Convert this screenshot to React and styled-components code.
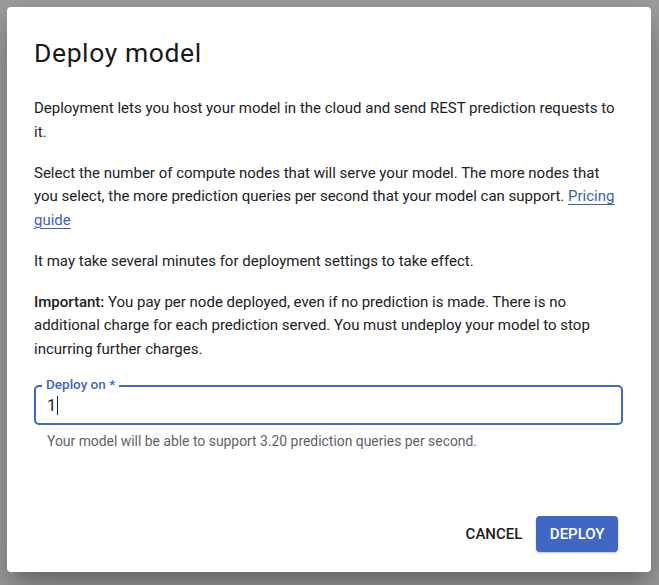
import React from "react";
import styled, { createGlobalStyle } from "styled-components";

const Global = createGlobalStyle`
  html, body { margin: 0; padding: 0; }
  body {
    background: #9f9f9f;
    font-family: Roboto, "Liberation Sans", Arial, sans-serif;
    -webkit-font-smoothing: antialiased;
  }
`;

const Page = styled.div`
  width: 659px;
  height: 585px;
  box-sizing: border-box;
  padding: 7px 8px 13px 7px;
  background: #9f9f9f;
`;

const Dialog = styled.div`
  box-sizing: border-box;
  width: 644px;
  height: 565px;
  background: #fff;
  border-radius: 4px;
  box-shadow: 0 11px 15px -7px rgba(0,0,0,0.2), 0 24px 38px 3px rgba(0,0,0,0.14), 0 9px 46px 8px rgba(0,0,0,0.12);
  padding: 30px 28px 20px 27px;
  display: flex;
  flex-direction: column;
`;

const Title = styled.h2`
  margin: 0;
  font-size: 26.5px;
  letter-spacing: 0.6px;
  line-height: 32px;
  font-weight: 400;
  color: #1a1a1a;
`;

const Body = styled.div`
  margin-top: 28px;
  color: #202124;
  font-size: 15px;
  line-height: 23.5px;
`;

const Para = styled.p`
  margin: 0 0 17.5px 0;
  &:last-child { margin-bottom: 0; }
`;

const Strong = styled.span`
  font-weight: 500;
`;

const Link = styled.a`
  color: #3b5fb5;
  text-decoration: underline;
  text-underline-offset: 3px;
  text-decoration-thickness: 1px;
`;

const Field = styled.div`
  position: relative;
  margin-top: 24px;
`;

const InputBox = styled.div`
  box-sizing: border-box;
  height: 40px;
  border: 2px solid #3f67c3;
  border-radius: 5px;
  display: flex;
  align-items: center;
  padding: 0 11px;
  font-size: 16.5px;
  color: #202124;
`;

const Caret = styled.span`
  display: inline-block;
  width: 1px;
  height: 19px;
  background: #202124;
  margin-left: 1px;
`;

const Label = styled.label`
  position: absolute;
  left: 8px;
  top: -9px;
  padding: 0 4px;
  background: #fff;
  font-size: 13.5px;
  line-height: 16px;
  color: #3f67c3;
  font-weight: 500;
`;

const Helper = styled.div`
  margin-top: 8px;
  padding-left: 13px;
  font-size: 13.9px;
  line-height: 16px;
  color: #5f6368;
`;

const Actions = styled.div`
  margin-top: auto;
  display: flex;
  justify-content: flex-end;
  align-items: center;
  gap: 6px;
  padding-right: 5px;
`;

const Button = styled.button`
  font-family: inherit;
  font-size: 15px;
  font-weight: 500;
  letter-spacing: 0;
  text-transform: uppercase;
  height: 36px;
  border-radius: 4px;
  border: none;
  cursor: pointer;
  padding: 0 ${(p) => (p.$primary ? "13.5px" : "8px")};
  background: ${(p) => (p.$primary ? "#3f67c3" : "transparent")};
  color: ${(p) => (p.$primary ? "#fff" : "#1a1a1a")};
  box-shadow: ${(p) => (p.$primary ? "0 1px 2px rgba(0,0,0,0.25)" : "none")};
`;

export default function App() {
  return (
    <>
      <Global />
      <Page>
        <Dialog>
          <Title>Deploy model</Title>
          <Body>
            <Para>
              Deployment lets you host your model in the cloud and send REST prediction requests to it.
            </Para>
            <Para>
              Select the number of compute nodes that will serve your model. The more nodes that you
              select, the more prediction queries per second that your model can support.{" "}
              <Link href="#">Pricing guide</Link>
            </Para>
            <Para>It may take several minutes for deployment settings to take effect.</Para>
            <Para>
              <Strong>Important:</Strong> You pay per node deployed, even if no prediction is made.
              There is no additional charge for each prediction served. You must undeploy your model
              to stop incurring further charges.
            </Para>
          </Body>
          <Field>
            <Label>Deploy on *</Label>
            <InputBox>
              1<Caret />
            </InputBox>
            <Helper>Your model will be able to support 3.20 prediction queries per second.</Helper>
          </Field>
          <Actions>
            <Button>Cancel</Button>
            <Button $primary>Deploy</Button>
          </Actions>
        </Dialog>
      </Page>
    </>
  );
}
